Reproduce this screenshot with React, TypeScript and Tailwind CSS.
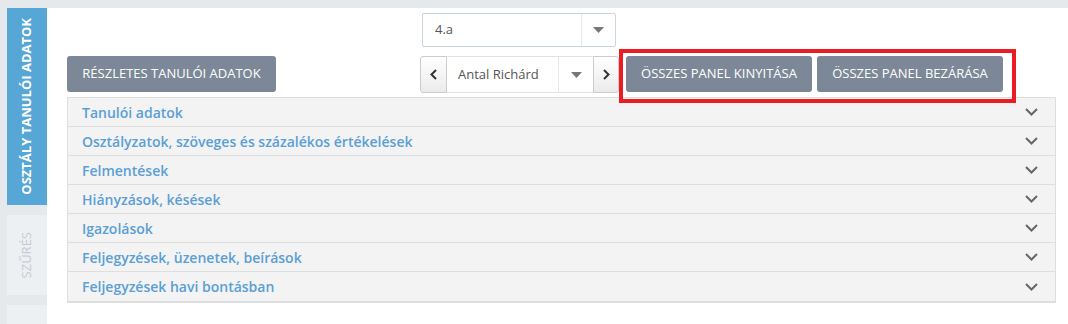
const PANELS = [
  'Tanulói adatok',
  'Osztályzatok, szöveges és százalékos értékelések',
  'Felmentések',
  'Hiányzások, késések',
  'Igazolások',
  'Feljegyzések, üzenetek, beírások',
  'Feljegyzések havi bontásban',
]

function Caret() {
  return (
    <svg width="11" height="6" viewBox="0 0 11 6" className="fill-[#777]">
      <path d="M0 0 L11 0 L5.5 6 Z" />
    </svg>
  )
}

function Chevron() {
  return (
    <svg width="13" height="8" viewBox="0 0 13 8" fill="none" className="stroke-[#666]">
      <path d="M1 1 L6.5 6.5 L12 1" strokeWidth="2" />
    </svg>
  )
}

function Arrow({ dir }: { dir: 'left' | 'right' }) {
  return (
    <svg width="7" height="11" viewBox="0 0 7 11" fill="none" className="stroke-[#333]">
      <path d={dir === 'left' ? 'M6 1 L1.5 5.5 L6 10' : 'M1 1 L5.5 5.5 L1 10'} strokeWidth="2" />
    </svg>
  )
}

export default function App() {
  return (
    <div className="w-[1068px] h-[324px] bg-[#e5e9ec] flex flex-col font-['Open_Sans',sans-serif] overflow-hidden">
      <div className="h-2 shrink-0" />
      <div className="flex flex-1 min-h-0">
        <aside className="w-[47px] shrink-0 pl-[7px] flex flex-col gap-[10px]">
          <div className="h-[197px] bg-[#56a6d6] flex items-center justify-center">
            <span className="[writing-mode:vertical-rl] rotate-180 text-white text-[13px] font-bold whitespace-nowrap">
              OSZTÁLY TANULÓI ADATOK
            </span>
          </div>
          <div className="h-[80px] bg-[#edf0f3] flex items-center justify-center">
            <span className="[writing-mode:vertical-rl] rotate-180 text-[#c6cacf] text-[13px] whitespace-nowrap">
              SZŰRÉS
            </span>
          </div>
          <div className="flex-1 bg-[#edf0f3]" />
        </aside>

        <main className="flex-1 bg-white pl-5 pr-3 pt-[5px]">
          <div className="ml-[355px] w-[194px] h-[34px] border border-[#c9d5e1] rounded-[2px] flex items-center">
            <span className="flex-1 pl-3 text-[13px] text-[#555]">4.a</span>
            <span className="w-[34px] h-full border-l border-[#e4e9ee] flex items-center justify-center">
              <Caret />
            </span>
          </div>

          <div className="mt-[9px] flex items-start">
            <button className="w-[209px] h-[36px] bg-[#7c8898] text-white text-[13px] rounded-[3px]">
              RÉSZLETES TANULÓI ADATOK
            </button>

            <div className="ml-[144px] flex h-[37px]">
              <button className="w-[27px] border border-[#ccc] rounded-l-[3px] bg-gradient-to-b from-white to-[#ebebeb] flex items-center justify-center">
                <Arrow dir="left" />
              </button>
              <div className="w-[146px] border-y border-[#dde3ea] bg-white flex items-center">
                <span className="flex-1 pl-[11px] text-[13px] text-[#555]">Antal Richárd</span>
                <span className="w-[35px] h-full border-l border-[#e4e9ee] flex items-center justify-center">
                  <Caret />
                </span>
              </div>
              <button className="w-[26px] border border-[#ccc] rounded-r-[3px] bg-gradient-to-b from-white to-[#ebebeb] flex items-center justify-center">
                <Arrow dir="right" />
              </button>
            </div>

            <div className="relative ml-[7px] flex gap-[5px]">
              <button className="w-[186px] h-[36px] bg-[#7c8898] text-white text-[13px] rounded-[3px]">
                ÖSSZES PANEL KINYITÁSA
              </button>
              <button className="w-[186px] h-[36px] bg-[#7c8898] text-white text-[13px] rounded-[3px]">
                ÖSSZES PANEL BEZÁRÁSA
              </button>
              <div className="absolute -left-[7px] -right-[13px] -top-[7px] -bottom-[11px] border-4 border-[#ec1c24] z-10 pointer-events-none" />
            </div>
          </div>

          <div className="mt-[4px] border border-[#dedede] border-b-2 bg-[#f3f3f3]">
            {PANELS.map((p, i) => (
              <div key={p}
                className={`h-[29px] flex items-center justify-between pl-[14px] pr-[17px] ${i < PANELS.length - 1 ? 'border-b border-[#dedede]' : ''}`}>
                <span className="text-[14px] font-semibold text-[#5a9fd6]">{p}</span>
                <Chevron />
              </div>
            ))}
          </div>
        </main>
      </div>
    </div>
  )
}
